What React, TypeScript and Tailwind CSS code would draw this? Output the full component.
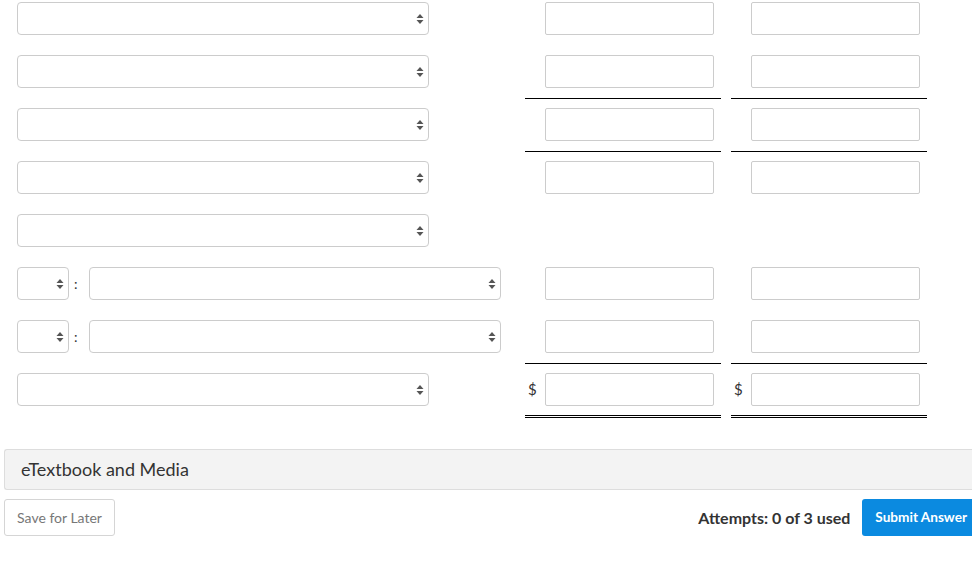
import React from 'react';

type Line = 'none' | 'single' | 'double';

const rows: { left: 'select' | 'pair'; amounts: boolean; dollar?: boolean; line: Line }[] = [
  { left: 'select', amounts: true, line: 'none' },
  { left: 'select', amounts: true, line: 'single' },
  { left: 'select', amounts: true, line: 'single' },
  { left: 'select', amounts: true, line: 'none' },
  { left: 'select', amounts: false, line: 'none' },
  { left: 'pair', amounts: true, line: 'none' },
  { left: 'pair', amounts: true, line: 'single' },
  { left: 'select', amounts: true, dollar: true, line: 'double' },
];

const Arrows = () => (
  <svg width="8" height="12" viewBox="0 0 8 12" className="shrink-0">
    <polygon points="0.5,5 4,1 7.5,5" fill="#555" />
    <polygon points="0.5,7 4,11 7.5,7" fill="#555" />
  </svg>
);

const Select = ({ width }: { width: string }) => (
  <div
    className={`${width} h-[33px] border border-[#ccc] rounded-[4px] bg-white flex items-center justify-end pr-[4px]`}
  >
    <Arrows />
  </div>
);

const AmountCell = ({ show, dollar, line }: { show: boolean; dollar?: boolean; line: Line }) => {
  const lineClass =
    line === 'single'
      ? 'h-[44px] border-b border-black'
      : line === 'double'
        ? 'h-[45px] border-b-[3px] border-double border-black'
        : 'h-[44px]';
  return (
    <div className={`w-[196px] ${lineClass}`}>
      {show && (
        <div className="flex items-center h-[33px]">
          <span className="w-[20px] pl-[3px] text-[15px] text-[#333]">{dollar ? '$' : ''}</span>
          <input className="w-[169px] h-[33px] border border-[#ccc] rounded-[2px] bg-white outline-none" />
        </div>
      )}
    </div>
  );
};

export default function App() {
  return (
    <div className="w-[972px] h-[568px] overflow-hidden bg-white font-['Lato','Open_Sans',sans-serif] text-[#333]">
      <div className="w-[984px] pt-[2px]">
        {rows.map((row, i) => (
          <div key={i} className="flex h-[53px]">
            <div className="w-[525px] pl-[17px]">
              {row.left === 'select' ? (
                <Select width="w-[412px]" />
              ) : (
                <div className="flex items-center">
                  <Select width="w-[52px]" />
                  <span className="w-[20px] pl-[5px] text-[14px] leading-none">:</span>
                  <Select width="w-[412px]" />
                </div>
              )}
            </div>
            <div className="flex gap-[10px]">
              <AmountCell show={row.amounts} dollar={row.dollar} line={row.line} />
              <AmountCell show={row.amounts} dollar={row.dollar} line={row.line} />
            </div>
          </div>
        ))}

        <div className="px-[4px] mt-[23px]">
          <div className="h-[41px] bg-[#f3f3f3] border-y border-l border-[#ddd] rounded-l-[3px] flex items-center pl-[16px]">
            <span className="text-[18px] text-[#333]">eTextbook and Media</span>
          </div>

          <div className="flex items-center justify-between mt-[9px]">
            <button className="h-[37px] w-[111px] border border-[#d5d5d5] rounded-[3px] bg-white text-[14px] text-[#777]">
              Save for Later
            </button>
            <div className="flex items-center gap-[12px]">
              <span className="text-[16px] font-bold text-[#333]">Attempts: 0 of 3 used</span>
              <button className="h-[37px] px-[13px] rounded-[3px] bg-[#0b8ae0] text-white text-[13.6px] font-bold">
                Submit Answer
              </button>
            </div>
          </div>
        </div>
      </div>
    </div>
  );
}
